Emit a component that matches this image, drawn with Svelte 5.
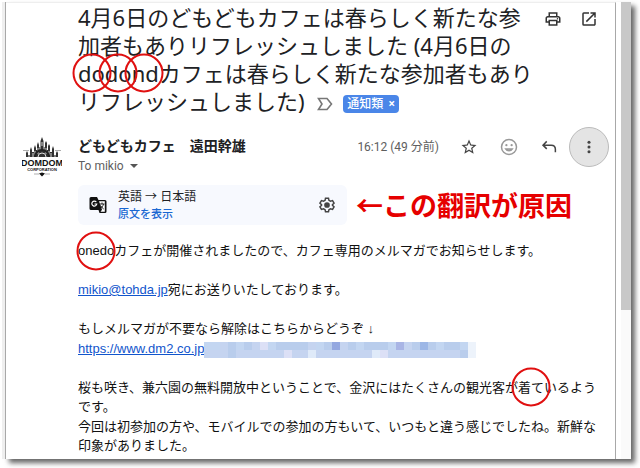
<script lang="ts">
    let labels = $state(['通知類']);
    let starred = $state(false);

    const colors: Record<string, string> = {
        a: '#b9cdec',
        b: '#c5d4f0',
        c: '#c3d6f1',
        d: '#94a8e0',
        e: '#9db7e6',
        f: '#dce0f6',
        g: '#dfeaf9',
        h: '#a9b5e5',
        i: '#edf3fb',
    };

    // one letter per tile, two rows of 34
    const tiles = [
        ...'ccbacabfcaaaabcadbacaaachbaeacaaci',
        ...'bbbabbbbbbfbbgbbbbbbbgfbbbbbbbbbai',
    ];

    function removeLabel(label: string) {
        labels = labels.filter((l) => l !== label);
    }
</script>

<div class="frame">
    <main class="mail">
        <header class="subject">
            <h1>
                4月6日のどもどもカフェは春らしく新たな参加者もありリフレッシュしました (4月6日の<span class="marked">dodond<span class="rings"><i></i><i></i><i></i></span></span>カフェは春らしく新たな参加者もありリフレッシュしました)
                <span class="labels">
                    <svg class="important" viewBox="0 0 16 14" aria-hidden="true">
                        <path d="M1.5 1.5H10L14.5 7L10 12.5H1.5L5 7Z" />
                    </svg>
                    {#each labels as label}
                        <span class="label">
                            {label}
                            <button aria-label="ラベルを削除" onclick={() => removeLabel(label)}>×</button>
                        </span>
                    {/each}
                </span>
            </h1>
            <div class="tools">
                <button class="tool" aria-label="印刷">
                    <svg viewBox="0 0 24 24">
                        <path d="M19 8h-1V3H6v5H5c-1.660 0-3 1.340-3 3v6h4v4h12v-4h4v-6c0-1.660-1.340-3-3-3zM8 5h8v3H8V5zm8 14H8v-4h8v4zm2-4v-2H6v2H4v-4c0-.55.45-1 1-1h14c.55 0 1 .45 1 1v4h-2z" />
                        <circle cx="18" cy="11.500" r="1" />
                    </svg>
                </button>
                <button class="tool" aria-label="新しいウィンドウで開く">
                    <svg viewBox="0 0 24 24">
                        <path d="M19 19H5V5h7V3H5a2 2 0 0 0-2 2v14a2 2 0 0 0 2 2h14c1.100 0 2-.9 2-2v-7h-2v7zM14 3v2h3.590l-9.830 9.830 1.410 1.410L19 6.410V10h2V3h-7z" />
                    </svg>
                </button>
            </div>
        </header>

        <section class="message">
            <svg class="avatar" viewBox="0 0 40 40" role="img" aria-label="DOMDOM CORPORATION">
                <path
                    class="castle"
                    d="M4 20V16L5 14L6 16V18H8V13L9 10L10 13V15H12V11L13 8L14 11V13H15V8L16 5L17 8V10H18.500V4L20 0L21.500 4V10H23V6L24 4L25 6V13H26V9L27 7L28 9V15H30V12L31 9L32 12V18H34V16L35 14L36 16V20Z"
                />
                <path class="gap" d="M7 20v-3M11 20v-4M13 18v-4M16 17v-6M18 13v-3M22 13v-3M24 17v-6M27 18v-4M29 20v-4M33 20v-3M20 5v4" />
                <path class="arch" d="M13 20a7 7 0 0 1 14 0" />
                <path class="arch thin" d="M16 20a4 4 0 0 1 8 0" />
                <text class="name" x="20" y="29" text-anchor="middle">DOMDOM</text>
                <text class="corp" x="20" y="34" text-anchor="middle">CORPORATION</text>
                <path class="fine" d="M1 13.500h6M33 13.500h6M12 37h5M23 37h5" />
                <path d="M17 36.500l3-1 3 1-3 3z" />
            </svg>

            <div class="content">
                <div class="sender">
                    <div class="from">
                        <strong>どもどもカフェ　遠田幹雄</strong>
                        <button class="to">To mikio <span class="caret"></span></button>
                    </div>
                    <time>16:12 (49 分前)</time>
                    <div class="actions">
                        <button aria-label="スター" aria-pressed={starred} onclick={() => (starred = !starred)}>
                            <svg viewBox="0 0 24 24">
                                <path d="M22 9.240l-7.190-.62L12 2 9.190 8.630 2 9.240l5.460 4.730L5.820 21 12 17.270 18.180 21l-1.630-7.030L22 9.240zM12 15.400l-3.760 2.270 1-4.280-3.320-2.880 4.380-.38L12 6.100l1.710 4.040 4.380.38-3.320 2.880 1 4.280L12 15.400z" />
                            </svg>
                        </button>
                        <button class="faded" aria-label="リアクション">
                            <svg viewBox="0 0 24 24">
                                <circle class="line" cx="12" cy="12" r="10" />
                                <circle cx="8.500" cy="9.500" r="1.500" />
                                <circle cx="15.500" cy="9.500" r="1.500" />
                                <path class="line" d="M7.500 14.500c2 3.300 7 3.300 9 0z" />
                            </svg>
                        </button>
                        <button aria-label="返信">
                            <svg viewBox="0 0 24 24">
                                <path class="bold" d="M9 4.500L4 9.500l5 5M4 9.500h11c3.500 0 5.500 2 5.500 5.500v4" />
                            </svg>
                        </button>
                        <button class="active" aria-label="その他">
                            <svg viewBox="0 0 24 24">
                                <circle cx="12" cy="4" r="2.600" />
                                <circle cx="12" cy="12" r="2.600" />
                                <circle cx="12" cy="20" r="2.600" />
                            </svg>
                        </button>
                    </div>
                </div>

                <div class="translation">
                    <div class="bar">
                        <svg class="translate" viewBox="0 0 18 18" aria-hidden="true">
                            <path d="M2 1h6l1.500 3H16a1.500 1.500 0 0 1 1.500 1.500v10A1.500 1.500 0 0 1 16 17h-5.500L9.500 14H2A1.500 1.500 0 0 1 .5 12.500v-10A1.500 1.500 0 0 1 2 1z" />
                            <path class="page" d="M10 5.200h5.800v10.600h-4.300l1.500-2z" />
                            <path class="g" d="M7.300 6A2.500 2.500 0 1 0 7.800 8H5.500" />
                            <path class="stroke" d="M10.500 8h5M13 6.500V8M14.500 8c-.5 2-1.500 3.500-3 4.500M11.500 9.500c.8 1.500 2 2.500 3.200 3.500" />
                        </svg>
                        <div class="languages">
                            <span>英語 → 日本語</span>
                            <a href="#original">原文を表示</a>
                        </div>
                        <button class="gear" aria-label="翻訳の設定">
                            <svg viewBox="0 0 24 24">
                                <path class="bold" d="M10 3h4l.6 2.800 2 1.200 2.800-.9 2 3.500-2.100 1.900v1l2.100 1.900-2 3.500-2.800-.9-2 1.200L14 21h-4l-.6-2.800-2-1.200-2.800.9-2-3.500 2.100-1.900v-1L2.600 9.600l2-3.500 2.800.9 2-1.200z" />
                                <circle cx="12" cy="12" r="3.800" />
                            </svg>
                        </button>
                    </div>
                    <strong class="note">←この翻訳が原因</strong>
                </div>

                <div class="text">
                    <p><span class="marked">onedo<span class="rings"><i></i></span></span>カフェが開催されましたので、カフェ専用のメルマガでお知らせします。</p>
                    <p><a href="mailto:mikio@tohda.jp">mikio@tohda.jp</a>宛にお送りいたしております。</p>
                    <p>
                        もしメルマガが不要なら解除はこちらからどうぞ ↓<br />
                        <a href="https://www.dm2.co.jp">https://www.dm2.co.jp</a><span class="mosaic">
                            {#each tiles as tile}
                                <i style:background={colors[tile]}></i>
                            {/each}
                        </span>
                    </p>
                    <p>
                        桜も咲き、兼六園の無料開放中ということで、金沢にはたくさんの観光客が<span class="marked">着て<span class="rings"><i></i></span></span>いるようです。<br />
                        今回は初参加の方や、モバイルでの参加の方もいて、いつもと違う感じでしたね。新鮮な印象がありました。
                    </p>
                </div>
            </div>
        </section>
    </main>
    <div class="scrollbar"><div class="thumb"></div></div>
</div>

<style>
    :global(body) {
        background: #fff;
    }

    .frame {
        display: flex;
        margin: 2px 9px 9px 5px;
        border-left: 1px solid #a8a8a8;
        background: #fff;
        box-shadow:
            -3px 0 0 #efefef,
            4px 4px 5px rgba(0, 0, 0, 0.6);
        color: #202124;
        font-family: 'Noto Sans', 'Noto Sans CJK JP', sans-serif;
    }

    .mail {
        flex: 1;
        min-width: 0;
        padding: 0 6px 3px 16px;
        border-top: 1px solid #eee;
        border-right: 1px solid #a8a8a8;
    }

    .scrollbar {
        width: 15px;
        padding-left: 5px;
        box-sizing: border-box;
        background: linear-gradient(to right, #fff 5px, #fafafa 5px);
    }

    .thumb {
        height: 67.5%;
        background: #c8c8c8;
    }

    button {
        display: flex;
        align-items: center;
        justify-content: center;
        padding: 0;
        border: none;
        background: none;
        color: inherit;
        font: inherit;
        cursor: pointer;
    }

    svg {
        fill: currentColor;
    }

    .subject {
        display: flex;
        align-items: flex-start;
        padding-left: 56px;
    }

    h1 {
        flex: 1;
        margin: 0;
        font-size: 22px;
        font-weight: 400;
        line-height: 28px;
    }

    .labels {
        display: inline-flex;
        align-items: center;
        gap: 10px;
        margin-left: 7px;
        vertical-align: middle;
    }

    .important {
        width: 16px;
        height: 14px;
        fill: none;
        stroke: #777;
        stroke-width: 1.6;
    }

    .label {
        display: flex;
        gap: 5px;
        padding: 0 4px;
        border-radius: 4px;
        background: #4a86e8;
        color: #fff;
        font-size: 12px;
        font-weight: 500;
        line-height: 18px;
    }

    .label button {
        font-weight: 700;
    }

    .tools {
        display: flex;
        padding-right: 2px;
        color: #333;
    }

    .tool {
        width: 36px;
        height: 32px;
    }

    .tool svg,
    .actions svg,
    .gear svg {
        width: 18px;
        height: 18px;
    }

    .message {
        display: flex;
        gap: 16px;
        padding-top: 12px;
    }

    .avatar {
        flex: none;
        width: 40px;
        height: 40px;
        margin-top: 10px;
        color: #111;
    }

    .castle {
        fill: #333;
    }

    .gap,
    .arch {
        fill: none;
        stroke: #fff;
        stroke-width: 0.8;
    }

    .arch {
        stroke: #222;
        stroke-width: 2;
    }

    .arch.thin {
        stroke: #ddd;
        stroke-width: 1;
    }

    .name {
        font: bold 9px 'Liberation Sans', sans-serif;
    }

    .corp {
        font: bold 4px 'Liberation Sans', sans-serif;
    }

    .fine {
        stroke: #777;
        stroke-width: 0.6;
    }

    .content {
        flex: 1;
        min-width: 0;
    }

    .sender {
        display: flex;
        align-items: flex-start;
    }

    .from {
        flex: 1;
        padding-top: 9px;
    }

    .from strong {
        display: block;
        font-size: 14px;
        line-height: 20px;
    }

    .to,
    time {
        color: #5e5e5e;
        font-family: Roboto, 'Noto Sans CJK JP', sans-serif;
        font-size: 12px;
        line-height: 20px;
    }

    .to {
        gap: 6px;
    }

    .caret {
        border: 4px solid transparent;
        border-top-color: #555;
        border-bottom: none;
    }

    time {
        padding: 10px 10px 0 0;
    }

    .actions {
        display: flex;
        color: #444;
    }

    .actions button {
        box-sizing: border-box;
        width: 40px;
        height: 40px;
        border-radius: 50%;
    }

    .actions .active {
        border: 1px solid #bbb;
        background: #e4e4e4;
    }

    .actions .faded {
        color: #999;
    }

    .active svg {
        width: 14px;
        height: 14px;
    }

    .line,
    .bold {
        fill: none;
        stroke: currentColor;
        stroke-width: 2;
    }

    .translation {
        display: flex;
        align-items: center;
        gap: 9px;
        margin-top: 9px;
    }

    .bar {
        display: flex;
        flex: 1;
        align-items: center;
        gap: 11px;
        max-width: 269px;
        height: 40px;
        padding: 0 11px;
        box-sizing: border-box;
        border-radius: 6px;
        background: #f7f9fe;
    }

    .translate {
        width: 18px;
        height: 18px;
        color: #111;
    }

    .page {
        fill: #fff;
    }

    .g,
    .stroke {
        fill: none;
        stroke: #fff;
        stroke-width: 1.2;
    }

    .stroke {
        stroke: #222;
        stroke-width: 1;
    }

    .languages {
        display: flex;
        flex: 1;
        flex-direction: column;
        font-size: 12px;
        line-height: 17px;
    }

    .languages a {
        color: #1967d2;
        font-size: 11px;
        font-weight: 500;
        text-decoration: none;
    }

    .gear {
        color: #444;
    }

    .note {
        color: #e60000;
        font-size: 27px;
        line-height: 40px;
        white-space: nowrap;
        font-family: 'Noto Sans CJK JP', sans-serif;
    }

    .text {
        padding: 16px 4px 0 0;
        color: #111;
        font-family: 'Liberation Sans', 'Noto Sans CJK JP', sans-serif;
        font-size: 13px;
        line-height: 1.5;
    }

    .text p {
        margin: 0 0 1.5em;
    }

    .text p:last-child {
        margin-bottom: 0;
    }

    .text a {
        color: #1155cc;
    }

    .marked {
        position: relative;
    }

    /* red rings drawn over the marked words */
    .rings {
        position: absolute;
        top: 50%;
        left: 50%;
        display: flex;
        padding-left: 13px;
        transform: translate(-50%, -50%);
    }

    .rings i {
        width: 35px;
        height: 35px;
        margin-left: -13px;
        border: 2px solid #e01010;
        border-radius: 50%;
    }

    .mosaic {
        display: inline-grid;
        grid-template-columns: repeat(34, 8px);
        grid-auto-rows: 8px;
        padding-top: 3px;
        vertical-align: top;
    }
</style>
